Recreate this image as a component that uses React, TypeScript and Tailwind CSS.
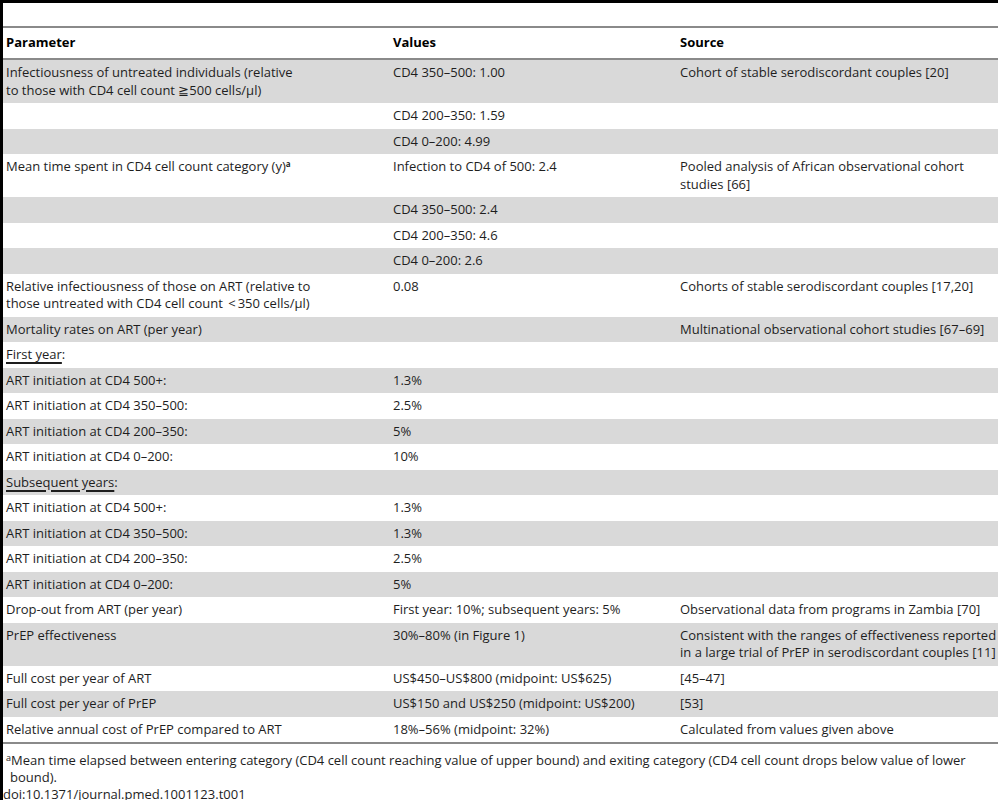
import type { ReactNode } from 'react';

type Row = { p: ReactNode; v?: ReactNode; s?: ReactNode };

const U = ({ children }: { children: ReactNode }) => (
  <span className="underline decoration-2 underline-offset-[3px]">{children}</span>
);

export default function App() {
  const rows: Row[] = [
    {
      p: (
        <>
          Infectiousness of untreated individuals (relative
          <br />
          to those with CD4 cell count ≧500 cells/μl)
        </>
      ),
      v: 'CD4 350–500: 1.00',
      s: 'Cohort of stable serodiscordant couples [20]',
    },
    { p: '', v: 'CD4 200–350: 1.59' },
    { p: '', v: 'CD4 0–200: 4.99' },
    {
      p: (
        <>
          Mean time spent in CD4 cell count category (y)
          <sup className="text-[8px] font-bold">a</sup>
          <br />
          &nbsp;
        </>
      ),
      v: 'Infection to CD4 of 500: 2.4',
      s: (
        <>
          Pooled analysis of African observational cohort
          <br />
          studies [66]
        </>
      ),
    },
    { p: '', v: 'CD4 350–500: 2.4' },
    { p: '', v: 'CD4 200–350: 4.6' },
    { p: '', v: 'CD4 0–200: 2.6' },
    {
      p: (
        <>
          Relative infectiousness of those on ART (relative to
          <br />
          those untreated with CD4 cell count <span className="px-[2px]">&lt;</span>350 cells/μl)
        </>
      ),
      v: '0.08',
      s: 'Cohorts of stable serodiscordant couples [17,20]',
    },
    {
      p: 'Mortality rates on ART (per year)',
      s: 'Multinational observational cohort studies [67–69]',
    },
    { p: <><U>First year</U>:</> },
    { p: 'ART initiation at CD4 500+:', v: '1.3%' },
    { p: 'ART initiation at CD4 350–500:', v: '2.5%' },
    { p: 'ART initiation at CD4 200–350:', v: '5%' },
    { p: 'ART initiation at CD4 0–200:', v: '10%' },
    { p: <><U>Subsequent years</U>:</> },
    { p: 'ART initiation at CD4 500+:', v: '1.3%' },
    { p: 'ART initiation at CD4 350–500:', v: '1.3%' },
    { p: 'ART initiation at CD4 200–350:', v: '2.5%' },
    { p: 'ART initiation at CD4 0–200:', v: '5%' },
    {
      p: 'Drop-out from ART (per year)',
      v: 'First year: 10%; subsequent years: 5%',
      s: 'Observational data from programs in Zambia [70]',
    },
    {
      p: 'PrEP effectiveness',
      v: '30%–80% (in Figure 1)',
      s: (
        <>
          Consistent with the ranges of effectiveness reported
          <br />
          in a large trial of PrEP in serodiscordant couples [11]
        </>
      ),
    },
    {
      p: 'Full cost per year of ART',
      v: 'US$450–US$800 (midpoint: US$625)',
      s: '[45–47]',
    },
    {
      p: 'Full cost per year of PrEP',
      v: 'US$150 and US$250 (midpoint: US$200)',
      s: '[53]',
    },
    {
      p: 'Relative annual cost of PrEP compared to ART',
      v: '18%–56% (midpoint: 32%)',
      s: 'Calculated from values given above',
    },
  ];

  return (
    <div className="h-[800px] w-[998px] overflow-hidden bg-white font-['Open_Sans',sans-serif] text-[13px] leading-[17.5px] text-[#1e1e1e]">
      <div className="h-full border-l-[3px] border-black">
        <div className="h-[26px] border-t-[3px] border-black" />
        <div className="border-t-2 border-b-2 border-[#8a8a8a]">
          <div className="grid h-[32px] grid-cols-[387px_287px_1fr] items-center border-b-2 border-[#8a8a8a] font-bold text-black">
            <div className="pl-[3px]">Parameter</div>
            <div className="pl-[3px]">Values</div>
            <div className="pl-[3px]">Source</div>
          </div>
          {rows.map((r, i) => (
            <div
              key={i}
              className={`grid grid-cols-[387px_287px_1fr] whitespace-nowrap py-[4px] ${i % 2 === 0 ? 'bg-[#d9d9d9]' : 'bg-white'}`}
            >
              <div className="pl-[3px]">{r.p}</div>
              <div className="pl-[3px]">{r.v}</div>
              <div className="pl-[3px]">{r.s}</div>
            </div>
          ))}
        </div>
        <div className="mt-[8px] whitespace-nowrap pl-[7px] -indent-[4px] leading-[17px]">
          <sup className="text-[9px]">a</sup>Mean time elapsed between entering category (CD4 cell count reaching value of upper bound) and exiting category (CD4 cell count drops below value of lower
          <br />
          bound).
        </div>
        <div className="leading-[17px]">doi:10.1371/journal.pmed.1001123.t001</div>
      </div>
    </div>
  );
}
